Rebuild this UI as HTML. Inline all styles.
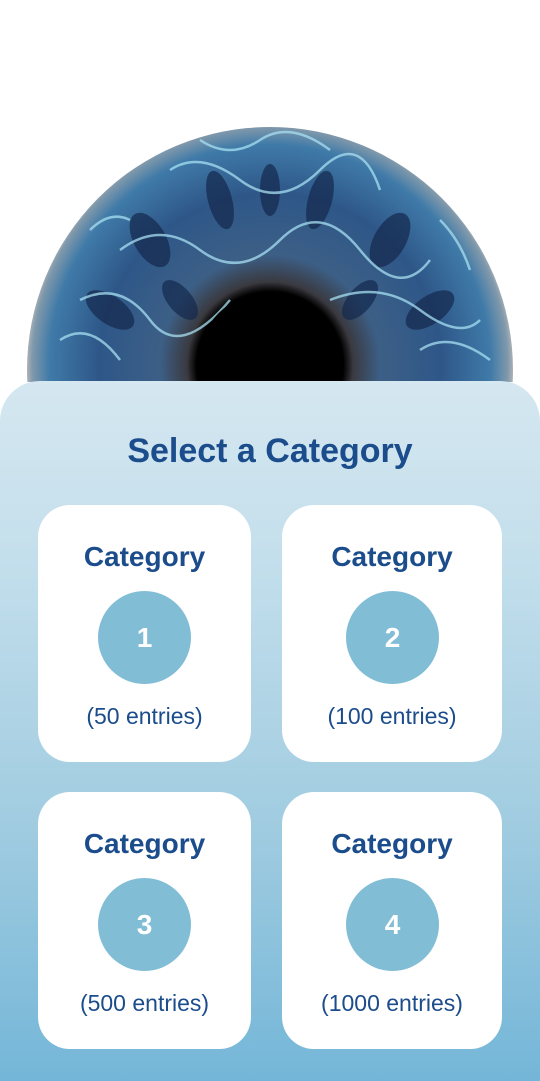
<!DOCTYPE html>
<html><head><style>
body{margin:0;width:540px;height:1060px;background:#fff;position:relative;overflow:hidden;font-family:"Liberation Sans",sans-serif;}
.eye{position:absolute;left:0;top:0;}
.panel{position:absolute;left:0;top:381px;width:540px;height:700px;border-radius:40px 40px 0 0;background:linear-gradient(#d5e7f0 0%,#c4dfec 25%,#9fcbe0 65%,#74b6d8 100%);}
h1{position:absolute;top:432px;left:0;width:540px;text-align:center;margin:0;font-size:34px;font-weight:bold;color:#1b4c8b;}
.card{position:absolute;width:213px;height:257px;background:#fff;border-radius:32px;text-align:center;color:#1b4c8b;}
.card .t{position:absolute;top:36px;width:100%;font-size:28px;font-weight:bold;}
.card .c{position:absolute;top:86px;left:60px;width:93px;height:93px;border-radius:50%;background:#82bdd6;color:#fff;font-size:28px;font-weight:bold;line-height:93px;}
.card .e{position:absolute;top:198px;width:100%;font-size:23px;}
</style></head><body>
<svg class="eye" width="540" height="400">
<defs>
<radialGradient id="ir" cx="270" cy="365" r="245" gradientUnits="userSpaceOnUse">
<stop offset="0" stop-color="#000"/><stop offset="0.3" stop-color="#000"/><stop offset="0.34" stop-color="#3a3a40"/><stop offset="0.45" stop-color="#3c5f86"/><stop offset="0.7" stop-color="#2e5788"/><stop offset="0.9" stop-color="#3f7aa8"/><stop offset="0.97" stop-color="#7f98ab"/><stop offset="1" stop-color="#bbb"/>
</radialGradient>
<clipPath id="cp"><rect x="0" y="0" width="540" height="382"/></clipPath>
</defs>
<g clip-path="url(#cp)">
<circle cx="270" cy="370" r="243" fill="url(#ir)"/>
<g fill="#14284d" opacity="0.7">
<ellipse cx="150" cy="240" rx="16" ry="30" transform="rotate(-30 150 240)"/>
<ellipse cx="390" cy="240" rx="16" ry="30" transform="rotate(30 390 240)"/>
<ellipse cx="220" cy="200" rx="12" ry="30" transform="rotate(-15 220 200)"/>
<ellipse cx="320" cy="200" rx="12" ry="30" transform="rotate(15 320 200)"/>
<ellipse cx="110" cy="310" rx="14" ry="28" transform="rotate(-55 110 310)"/>
<ellipse cx="430" cy="310" rx="14" ry="28" transform="rotate(55 430 310)"/>
<ellipse cx="270" cy="190" rx="10" ry="26"/>
<ellipse cx="180" cy="300" rx="12" ry="24" transform="rotate(-40 180 300)"/>
<ellipse cx="360" cy="300" rx="12" ry="24" transform="rotate(40 360 300)"/>
</g>
<g stroke="#a8e0f2" stroke-width="2.5" fill="none" opacity="0.75">
<path d="M120 250 Q160 220 200 250 T280 240 T360 250 T430 260"/>
<path d="M80 300 Q120 280 150 320 T230 300"/>
<path d="M330 300 Q380 280 420 310 T480 320"/>
<path d="M170 170 Q200 150 240 180 T320 170 T380 190"/>
<path d="M60 340 Q90 320 120 360"/>
<path d="M420 350 Q450 330 490 360"/>
<path d="M200 140 Q230 160 260 140 T330 150"/>
<path d="M90 230 Q110 210 130 220"/>
<path d="M440 220 Q460 240 470 270"/>
</g>
<circle cx="270" cy="365" r="73" fill="#000"/>
</g>
</svg>
<div class="panel"></div>
<h1>Select a Category</h1>
<div class="card" style="left:38px;top:505px"><div class="t">Category</div><div class="c">1</div><div class="e">(50 entries)</div></div>
<div class="card" style="left:282px;top:505px;width:220px"><div class="t">Category</div><div class="c" style="left:64px">2</div><div class="e">(100 entries)</div></div>
<div class="card" style="left:38px;top:792px"><div class="t">Category</div><div class="c">3</div><div class="e">(500 entries)</div></div>
<div class="card" style="left:282px;top:792px;width:220px"><div class="t">Category</div><div class="c" style="left:64px">4</div><div class="e">(1000 entries)</div></div>
</body></html>
